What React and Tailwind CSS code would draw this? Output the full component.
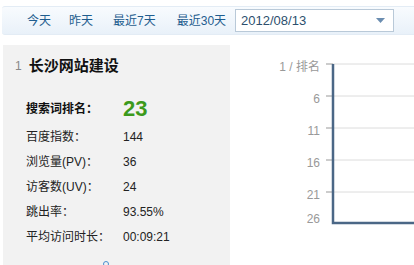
import React from 'react';

const font = { fontFamily: '"Liberation Sans", "Noto Sans CJK SC", sans-serif' };

const rows = [
  ['百度指数：', '144'],
  ['浏览量(PV)：', '36'],
  ['访客数(UV)：', '24'],
  ['跳出率：', '93.55%'],
  ['平均访问时长：', '00:09:21'],
];

const ticks = [
  { y: 19, label: '1 / 排名', grid: true },
  { y: 51, label: '6', grid: true },
  { y: 83, label: '11', grid: true },
  { y: 115, label: '16', grid: true },
  { y: 147, label: '21', grid: true },
  { y: 171, label: '26', grid: false },
];

const RankChart = () => (
  <svg width="184" height="220" className="block">
    {ticks.map((t) => (
      <g key={t.label}>
        {t.grid && <line x1="103" y1={t.y} x2="184" y2={t.y} stroke="#dcdcdc" strokeWidth="1" />}
        {t.grid && <line x1="96" y1={t.y} x2="103" y2={t.y} stroke="#999" strokeWidth="1" />}
        <text
          x="90"
          y={t.y + 7}
          textAnchor="end"
          fontSize="12"
          fill="#999"
          fontFamily='"Liberation Sans", "Noto Sans CJK SC", sans-serif'
        >
          {t.label}
        </text>
      </g>
    ))}
    <polyline points="103,19 103,178 184,178" fill="none" stroke="#4b6786" strokeWidth="2.5" />
  </svg>
);

const App = () => {
  return (
    <div className="w-[414px] h-[265px] overflow-hidden bg-white text-[12px]" style={font}>
      <div className="mt-[6px] ml-[2px] h-[29px] flex items-center pl-[25px] border-t border-b border-[#e3ecf5] bg-gradient-to-b from-[#f8fbfe] to-[#e9f1f9] rounded-l-[3px]">
        <span className="text-[#1f5d8f]">今天</span>
        <span className="ml-[18px] text-[#1f5d8f]">昨天</span>
        <span className="ml-[20px] text-[#1f5d8f]">最近7天</span>
        <span className="ml-[21px] text-[#1f5d8f]">最近30天</span>
        <div className="ml-[9px] w-[159px] h-[23px] bg-white border border-[#b9c9d8] flex items-center justify-between pl-[5px] pr-[8px]">
          <span className="text-[13px] text-[#2d4f6e]">2012/08/13</span>
          <svg width="9" height="5" viewBox="0 0 9 5">
            <polygon points="0,0 9,0 4.5,5" fill="#6b8db0" />
          </svg>
        </div>
      </div>

      <div className="mt-[10px] flex">
        <div className="ml-[3px] w-[227px] h-[230px] bg-[#f2f2f2] pt-[10px] relative">
          <div className="flex items-center">
            <span className="ml-[12px] text-[#888]">1</span>
            <span className="ml-[7px] text-[15px] font-bold text-[#111]">长沙网站建设</span>
          </div>
          <div className="mt-[18px] ml-[23px] flex items-center h-[26px]">
            <span className="w-[97px] font-bold text-[#111]">搜索词排名：</span>
            <span className="text-[22px] font-bold text-[#3c9a1c]">23</span>
          </div>
          <div className="mt-[3px]">
            {rows.map(([k, v]) => (
              <div key={k} className="ml-[23px] h-[25px] flex items-center text-[#222]">
                <span className="w-[97px]">{k}</span>
                <span>{v}</span>
              </div>
            ))}
          </div>
          <div className="absolute left-[100px] top-[216px] w-[6px] h-[6px] rounded-full border border-[#4a8fd0]" />
        </div>
        <div className="flex-1">
          <RankChart />
        </div>
      </div>
    </div>
  );
};

export default App;
